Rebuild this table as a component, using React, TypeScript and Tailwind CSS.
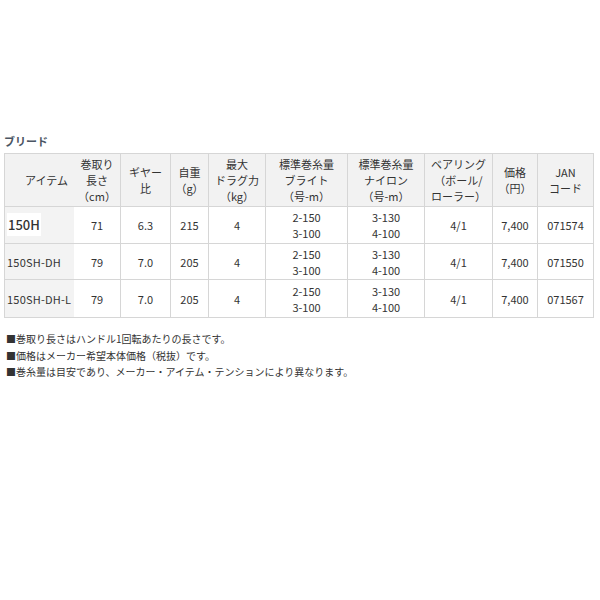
const font = { fontFamily: '"Noto Sans CJK JP", "Noto Sans", sans-serif' };

type Row = {
  item: string;
  length: string;
  gear: string;
  weight: string;
  drag: string;
  pe: string[];
  nylon: string[];
  bearing: string;
  price: string;
  jan: string;
  big?: boolean;
};

const rows: Row[] = [
  { item: "150H", length: "71", gear: "6.3", weight: "215", drag: "4", pe: ["2-150", "3-100"], nylon: ["3-130", "4-100"], bearing: "4/1", price: "7,400", jan: "071574", big: true },
  { item: "150SH-DH", length: "79", gear: "7.0", weight: "205", drag: "4", pe: ["2-150", "3-100"], nylon: ["3-130", "4-100"], bearing: "4/1", price: "7,400", jan: "071550" },
  { item: "150SH-DH-L", length: "79", gear: "7.0", weight: "205", drag: "4", pe: ["2-150", "3-100"], nylon: ["3-130", "4-100"], bearing: "4/1", price: "7,400", jan: "071567" },
];

const headers = [
  ["巻取り", "長さ", "（cm）"],
  ["ギヤー", "比"],
  ["自重", "（g）"],
  ["最大", "ドラグ力", "（kg）"],
  ["標準巻糸量", "ブライト", "（号-m）"],
  ["標準巻糸量", "ナイロン", "（号-m）"],
  ["ベアリング", "（ボール/", "ローラー）"],
  ["価格", "（円）"],
  ["JAN", "コード"],
];

const widths = ["w-[69px]", "w-[47px]", "w-[50px]", "w-[38px]", "w-[57px]", "w-[82px]", "w-[77px]", "w-[68px]", "w-[45px]", "w-[56px]"];

const notes = [
  "■巻取り長さはハンドル1回転あたりの長さです。",
  "■価格はメーカー希望本体価格（税抜）です。",
  "■巻糸量は目安であり、メーカー・アイテム・テンションにより異なります。",
];

export default function App() {
  const cell = "border border-[#d6d6d6] text-center align-middle px-0";
  const heights = ["h-[37px]", "h-[36px]", "h-[38px]"];
  return (
    <div className="w-[600px] h-[600px] bg-white text-[#333] pt-[134px] pl-[4px]" style={font}>
      <div className="text-[11px] font-bold text-[#4b5563] leading-[14px] mb-[5px]">ブリード</div>
      <table className="table-fixed border-collapse w-[589px] text-[11px] leading-[16px]">
        <colgroup>
          {widths.map((w, i) => (
            <col key={i} className={w} />
          ))}
        </colgroup>
        <thead>
          <tr className="h-[53px] bg-[#f2f2f2]">
            <th className="border-y border-l border-[#d6d6d6] font-normal text-right pr-[5px] align-middle">アイテム</th>
            {headers.map((h, i) => (
              <th key={i} className={`${cell} font-normal ${i === 0 ? "border-l-[#f2f2f2]" : ""}`}>
                {h.map((line, j) => (
                  <div key={j}>{line}</div>
                ))}
              </th>
            ))}
          </tr>
        </thead>
        <tbody>
          {rows.map((r, idx) => (
            <tr key={r.item} className={heights[idx]}>
              <td className="border-y border-l border-[#d6d6d6] bg-[#f3f3f3] text-left pl-[2px] align-middle">
                {r.big ? (
                  <span className="bg-white px-[1px] py-[2px] text-[13px] font-medium">{r.item}</span>
                ) : (
                  <span className="tracking-[0.02em]">{r.item}</span>
                )}
              </td>
              <td className={`${cell} border-l-[#f3f3f3]`}>{r.length}</td>
              <td className={cell}>{r.gear}</td>
              <td className={cell}>{r.weight}</td>
              <td className={cell}>{r.drag}</td>
              <td className={cell}>
                {r.pe.map((p) => (
                  <div key={p}>{p}</div>
                ))}
              </td>
              <td className={cell}>
                {r.nylon.map((p) => (
                  <div key={p}>{p}</div>
                ))}
              </td>
              <td className={cell}>{r.bearing}</td>
              <td className={cell}>{r.price}</td>
              <td className={cell}>{r.jan}</td>
            </tr>
          ))}
        </tbody>
      </table>
      <div className="mt-[13px] pl-[2px] text-[10px] leading-[16.5px]">
        {notes.map((n) => (
          <div key={n}>{n}</div>
        ))}
      </div>
    </div>
  );
}
